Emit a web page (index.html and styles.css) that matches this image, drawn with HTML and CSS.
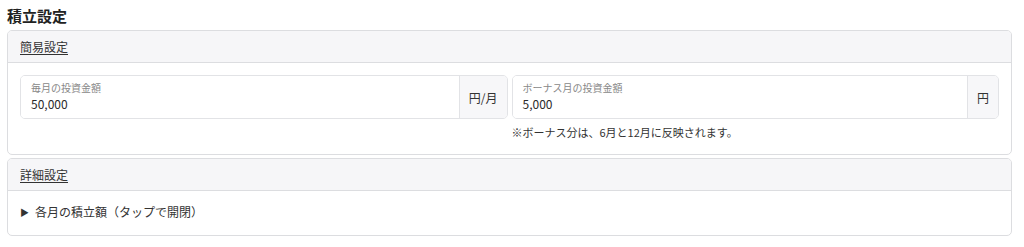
FILE: index.html
```html
<!DOCTYPE html>
<html lang="ja">
<head>
<meta charset="utf-8">
<link rel="stylesheet" href="styles.css">
</head>
<body>
<div class="page">
  <h2 class="title">積立設定</h2>
  <section class="card">
    <div class="card-header"><span class="hlink">簡易設定</span></div>
    <div class="card-body">
      <div class="cols">
        <div class="col">
          <div class="group">
            <div class="field">
              <div class="label">毎月の投資金額</div>
              <div class="value">50,000</div>
            </div>
            <div class="addon">円/月</div>
          </div>
        </div>
        <div class="col">
          <div class="group">
            <div class="field">
              <div class="label">ボーナス月の投資金額</div>
              <div class="value">5,000</div>
            </div>
            <div class="addon">円</div>
          </div>
          <div class="note">※ボーナス分は、6月と12月に反映されます。</div>
        </div>
      </div>
    </div>
  </section>
  <section class="card">
    <div class="card-header"><span class="hlink">詳細設定</span></div>
    <div class="card-body detail">
      <div class="summary"><span class="tri">▶</span>各月の積立額（タップで開閉）</div>
    </div>
  </section>
</div>
</body>
</html>
```

FILE: styles.css
```css
html, body {
  margin: 0;
  padding: 0;
  background: #ffffff;
}
body {
  font-family: "Noto Sans CJK JP", "Noto Sans", sans-serif;
  color: #333333;
}
.page {
  padding: 6px 12px 0 7px;
}
.title {
  margin: 0 0 5px 0;
  font-size: 15px;
  line-height: 19px;
  font-weight: 700;
  color: #222222;
}
.card {
  border: 1px solid #dcdde0;
  border-radius: 5px;
  margin-bottom: 3px;
  overflow: hidden;
}
.card-header {
  background: #f6f6f8;
  border-bottom: 1px solid #dcdde0;
  padding: 0 12px;
  height: 31px;
  display: flex;
  align-items: center;
  font-size: 12px;
  color: #333333;
}
.hlink {
  text-decoration: underline;
  text-underline-offset: 2px;
}
.card-body {
  padding: 12px 12px 13px 12px;
}
.cols {
  display: grid;
  grid-template-columns: 1fr 1fr;
  gap: 4px;
}
.group {
  display: flex;
  height: 44px;
  border: 1px solid #e2e3e6;
  border-radius: 5px;
  box-sizing: border-box;
  overflow: hidden;
}
.field {
  flex: 1;
  padding: 5px 10px 0 10px;
  background: #ffffff;
}
.label {
  font-size: 10px;
  line-height: 14px;
  color: #888888;
}
.value {
  font-size: 12px;
  line-height: 18px;
  color: #2a2a2a;
}
.addon {
  display: flex;
  align-items: center;
  padding: 0 9px;
  background: #f7f7f9;
  border-left: 1px solid #e2e3e6;
  font-size: 12px;
  color: #333333;
}
.note {
  margin-top: 4px;
  font-size: 11px;
  line-height: 18px;
  color: #333333;
}
.detail {
  padding: 11px 12px 12px 12px;
}
.summary {
  font-size: 12px;
  line-height: 20px;
  color: #333333;
}
.tri {
  font-size: 9px;
  margin-right: 6px;
  vertical-align: 1px;
}
```
